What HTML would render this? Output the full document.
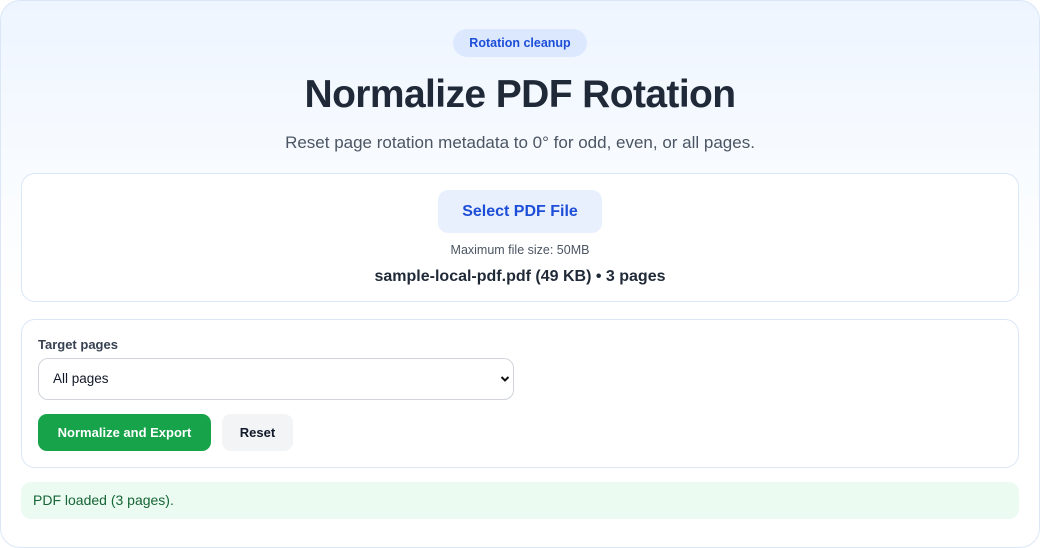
<!DOCTYPE html>
<html><head><style>
*{box-sizing:border-box;margin:0;padding:0}
body{width:1040px;height:548px;background:#fff;font-family:"Liberation Sans",sans-serif;overflow:hidden}
.wrap{position:absolute;left:0;top:0;width:1040px;height:548px;border:1px solid #dbe7f7;border-radius:20px;background:linear-gradient(#eef5ff 0,#f8fbff 170px,#fff 300px)}
.pill{position:absolute;left:453px;top:29px;width:134px;height:28px;border-radius:14px;background:#dbe8fe;color:#1d4ed8;font-weight:bold;font-size:12.5px;line-height:28px;text-align:center}
h1{position:absolute;left:0;width:1040px;top:73px;text-align:center;font-size:39px;font-weight:bold;color:#1f2937;letter-spacing:-0.6px}
.sub{position:absolute;left:0;width:1040px;top:133px;text-align:center;font-size:17px;color:#4b5563}
.card{position:absolute;left:21px;width:998px;border:1px solid #dbe7f7;border-radius:14px;background:#fff}
.sel{position:absolute;left:438px;top:190px;width:164px;height:43px;border-radius:10px;background:#e9f0fd;color:#1d4ed8;font-weight:bold;font-size:16px;line-height:43px;text-align:center}
.max{position:absolute;left:0;width:1040px;top:243px;text-align:center;font-size:12.5px;color:#4b5563}
.fn{position:absolute;left:0;width:1040px;top:268px;text-align:center;font-size:16px;font-weight:bold;color:#1f2937}
.lbl{position:absolute;left:38px;top:337px;font-size:13px;font-weight:bold;color:#374151}
.dd{position:absolute;left:38px;top:358px;width:476px;height:42px;border:1px solid #d1d5db;border-radius:10px;background:#fff;font-size:13.5px;color:#111827;line-height:40px;padding-left:14px}
.btn1{position:absolute;left:38px;top:414px;width:173px;height:37px;border-radius:9px;background:#16a34a;color:#fff;font-weight:bold;font-size:13px;line-height:37px;text-align:center}
.btn2{position:absolute;left:222px;top:414px;width:71px;height:37px;border-radius:9px;background:#f3f4f6;color:#111827;font-weight:bold;font-size:13px;line-height:37px;text-align:center}
.st{position:absolute;left:21px;top:482px;width:998px;height:37px;border-radius:10px;background:#ebfbf2;color:#166534;font-size:14px;line-height:37px;padding-left:12px}
</style></head><body>
<div class="wrap"></div>
<div class="pill">Rotation cleanup</div>
<h1>Normalize PDF Rotation</h1>
<div class="sub">Reset page rotation metadata to 0° for odd, even, or all pages.</div>
<div class="card" style="top:173px;height:129px"></div>
<div class="sel">Select PDF File</div>
<div class="max">Maximum file size: 50MB</div>
<div class="fn">sample-local-pdf.pdf (49 KB) • 3 pages</div>
<div class="card" style="top:319px;height:149px"></div>
<div class="lbl">Target pages</div>
<div class="dd">All pages<svg style="position:absolute;right:3px;top:16px" width="10" height="8" viewBox="0 0 10 8"><path d="M1.5 2 L5 5.5 L8.5 2" stroke="#111" stroke-width="2" fill="none"/></svg></div>
<div class="btn1">Normalize and Export</div>
<div class="btn2">Reset</div>
<div class="st">PDF loaded (3 pages).</div>
</body></html>
